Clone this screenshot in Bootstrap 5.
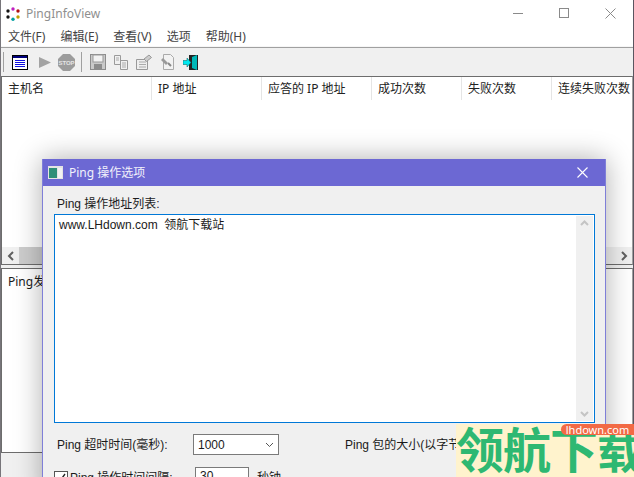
<!DOCTYPE html>
<html lang="zh-CN">
<head>
  <meta charset="UTF-8">
  <meta name="viewport" content="width=device-width, initial-scale=1.0">
  <title>PingInfoView</title>
  <link href="https://cdn.jsdelivr.net/npm/bootstrap@5.3.2/dist/css/bootstrap.min.css" rel="stylesheet">
  <style>
    html, body { height: 477px; overflow: hidden; }
    body {
      background: #5a5560;
      font-family: "Noto Sans", "Noto Sans CJK SC", sans-serif;
      font-size: 12px;
      color: #1a1a1a;
      line-height: 16px;
    }
    /* main window */
    .app { width: 633px; height: 477px; background: #f0f0f0; border-left: 1px solid #77757a; }
    .titlebar { height: 27px; background: #fff; padding-left: 5px; color: #8f8f8f; }
    .titlebar .name { font-size: 12px; margin-left: 6px; }
    .win-btn { width: 46px; height: 27px; }
    .menubar { height: 19px; background: #fff; gap: 15px; padding-left: 7px; color: #444; }
    .menu-rule { height: 2px; background: #f6f6f6; border-bottom: 1px solid #a0a0a0; }
    .toolbar { height: 28px; background: #f0f0f0; padding-left: 2px; }
    .tool-sep { width: 1px; height: 20px; background: #a0a0a0; }
    .pane { background: #fff; border: 1px solid #6d6d6d; border-right-color: #a0a0a0; }
    .list-pane { height: 189px; }
    .list-head { height: 23px; }
    .list-head > div { padding-left: 6px; border-right: 1px solid #e5e5e5; white-space: nowrap; overflow: hidden; color: #222; line-height: 23px; }
    .hscroll { height: 17px; background: #f0f0f0; }
    .hscroll .arrow { width: 17px; color: #606060; }
    .hscroll .thumb { background: #cdcdcd; }
    .detail-pane { height: 185px; margin-top: 3px; padding: 5px 6px; }
    /* dialog over the window */
    .dialog {
      position: absolute; left: 42px; top: 159px; width: 564px; height: 340px;
      background: #f0f0f0; border: 1px solid #7f7fd8; border-top: 0;
      box-shadow: 0 0 26px rgba(0, 0, 0, .32);
    }
    .dialog-title { height: 27px; background: #6c68d3; color: #f2f2fb; padding: 0 0 0 5px; font-size: 12px; }
    .dialog-title .name { margin-left: 6px; }
    .dialog-body { padding: 10px 10px 0 11px; font-family: "Liberation Sans", "Noto Sans CJK SC", sans-serif; }
    .field-label { padding-left: 3px; margin-bottom: 2px; color: #1c1c1c; }
    .addr-box { height: 209px; background: #fff; border: 1px solid #0078d7; padding: 2px 4px; }
    .addr-scroll { width: 17px; background: #f0f0f0; margin: -1px -3px -1px 0; }
    .option-row { height: 21px; margin-top: 11px; }
    .option-row + .option-row { margin-top: 12px; }
    .combo { width: 86px; height: 21px; background: #fff; border: 1px solid #7a7a7a; padding: 0 4px; }
    .num-box { height: 21px; background: #fff; border: 1px solid #7a7a7a; padding: 0 4px; }
    .check-box { width: 14px; height: 14px; background: #fff; border: 1px solid #555; margin-right: 2px; }
    /* site watermark */
    .mark { position: absolute; left: 456px; top: 424px; width: 178px; height: 53px; overflow: hidden; }
    .mark-tag {
      position: absolute; right: 0; top: 0; width: 73px; height: 11px;
      background: #f26a45; color: #fff; font-size: 11px; line-height: 11px;
      text-align: center; border-radius: 6px 0 0 6px;
    }
    .mark-text {
      position: absolute; left: 0; top: -5px; white-space: nowrap;
      font-family: "Noto Sans CJK SC", sans-serif; font-weight: 700;
      font-size: 48px; line-height: 56px; color: #2eb872; letter-spacing: -1px;
    }
  </style>
</head>
<body>
  <div class="app d-flex flex-column">
    <div class="titlebar d-flex align-items-center">
      <svg width="14" height="14" viewBox="0 0 14 14">
        <circle cx="7" cy="2" r="1.700" fill="#c020c0"/><circle cx="12" cy="4" r="1.700" fill="#b01010"/>
        <circle cx="12" cy="10" r="1.700" fill="#c0a000"/><circle cx="7" cy="12.200" r="1.700" fill="#00a0a0"/>
        <circle cx="2" cy="10" r="1.700" fill="#111"/><circle cx="2" cy="4" r="1.700" fill="#111"/>
      </svg>
      <span class="name flex-grow-1">PingInfoView</span>
      <div class="win-btn d-flex align-items-center justify-content-center">
        <svg width="11" height="11" viewBox="0 0 11 11"><path d="M0 5.500h10" stroke="#8a8a8a"/></svg>
      </div>
      <div class="win-btn d-flex align-items-center justify-content-center">
        <svg width="11" height="11" viewBox="0 0 11 11"><rect x=".5" y=".5" width="9" height="9" fill="none" stroke="#8a8a8a"/></svg>
      </div>
      <div class="win-btn d-flex align-items-center justify-content-center">
        <svg width="11" height="11" viewBox="0 0 11 11"><path d="M.5.5l10 10M10.500.5l-10 10" stroke="#8a8a8a"/></svg>
      </div>
    </div>
    <div class="menubar d-flex align-items-center">
      <span>文件(F)</span><span>编辑(E)</span><span>查看(V)</span><span>选项</span><span>帮助(H)</span>
    </div>
    <div class="menu-rule"></div>
    <div class="toolbar d-flex align-items-center">
      <div class="tool-sep"></div>
      <svg class="ms-2" width="16" height="15" viewBox="0 0 16 15"><rect x=".5" y=".5" width="15" height="14" fill="#fff" stroke="#000"/><rect x="1" y="1" width="14" height="2" fill="#00007c"/><path d="M3 5.500h10M3 7.500h10M3 9.500h10M3 11.500h10" stroke="#1414e0"/></svg>
      <svg style="margin-left:11px" width="12" height="13" viewBox="0 0 12 13"><path d="M0 1l12 5.500L0 12z" fill="#a3a3a3"/></svg>
      <svg style="margin-left:7px" width="17" height="17" viewBox="0 0 17 17"><path d="M5 0h7l5 5v7l-5 5H5l-5-5V5z" fill="#9c9c9c"/><text x="8.500" y="10.500" font-size="6" font-weight="700" text-anchor="middle" fill="#e4e4e4" font-family="Liberation Sans, sans-serif">STOP</text></svg>
      <div class="tool-sep" style="margin-left:6px"></div>
      <svg style="margin-left:8px" width="16" height="16" viewBox="0 0 16 16"><rect x=".5" y=".5" width="15" height="15" fill="#c9c9c9" stroke="#8c8c8c"/><rect x="3" y="1" width="10" height="7" fill="#f2f2f2" stroke="#999"/><rect x="4" y="10" width="8" height="5" fill="#8c8c8c"/></svg>
      <svg style="margin-left:7px" width="16" height="15" viewBox="0 0 16 15"><path d="M1.500.5h6v9h-6zM7.500 5.500h7v9h-7z" fill="#f0f0f0" stroke="#9a9a9a"/><path d="M3 3h3M3 5h3M9 8h4M9 10h4M9 12h4" stroke="#aaa"/></svg>
      <svg style="margin-left:7px" width="16" height="16" viewBox="0 0 16 16"><path d="M.5 5.500h11v10H.5z" fill="#eee" stroke="#999"/><path d="M3 8h7M3 10.500h7M3 13h7" stroke="#aaa"/><path d="M8 5l5-4 2.500 2.500-5 4z" fill="#ccc" stroke="#999"/></svg>
      <svg style="margin-left:8px" width="16" height="16" viewBox="0 0 16 16"><path d="M3.500.5h7l3 3v12h-10z" fill="#f2f2f2" stroke="#aaa"/><path d="M1 6l5 5 2-2-5-5z" fill="#9a9a9a"/><path d="M8 9l3 3" stroke="#888" stroke-width="2"/></svg>
      <svg style="margin-left:7px" width="17" height="17" viewBox="0 0 17 17"><path d="M6 1h9v15H6z" fill="#222"/><path d="M9 3l5-2v15l-5-2z" fill="#00b8b8"/><path d="M0 6.500h4V4l4 4.500L4 13v-2.500H0z" fill="#00e8f0" stroke="#005858" stroke-width=".5"/></svg>
    </div>
    <div class="pane list-pane d-flex flex-column">
      <div class="list-head d-flex">
        <div style="width:150px">主机名</div>
        <div style="width:110px">IP 地址</div>
        <div style="width:110px">应答的 IP 地址</div>
        <div style="width:90px">成功次数</div>
        <div style="width:90px">失败次数</div>
        <div class="flex-grow-1 border-0">连续失败次数</div>
      </div>
      <div class="flex-grow-1"></div>
      <div class="hscroll d-flex">
        <div class="arrow d-flex align-items-center justify-content-center">
          <svg width="8" height="10" viewBox="0 0 8 10"><path d="M6 1L2 5l4 4" fill="none" stroke="#606060" stroke-width="2"/></svg>
        </div>
        <div class="thumb" style="width:400px"></div>
        <div class="flex-grow-1"></div>
        <div class="arrow d-flex align-items-center justify-content-center">
          <svg width="8" height="10" viewBox="0 0 8 10"><path d="M2 1l4 4-4 4" fill="none" stroke="#606060" stroke-width="2"/></svg>
        </div>
      </div>
    </div>
    <div class="pane detail-pane">Ping发送状态</div>
  </div>

  <div class="dialog">
    <div class="dialog-title d-flex align-items-center">
      <svg width="15" height="13" viewBox="0 0 15 13"><rect width="15" height="13" fill="#e4e4e4"/><rect x="1" y="2" width="8" height="10" fill="#2f8f78"/><rect x="10" y="2" width="4" height="10" fill="#f2f2f2"/></svg>
      <span class="name flex-grow-1">Ping 操作选项</span>
      <div class="win-btn d-flex align-items-center justify-content-center">
        <svg width="11" height="11" viewBox="0 0 11 11"><path d="M.5.5l10 10M10.500.5l-10 10" stroke="#fff" stroke-width="1.100"/></svg>
      </div>
    </div>
    <div class="dialog-body">
      <div class="field-label">Ping 操作地址列表:</div>
      <div class="addr-box d-flex">
        <div class="flex-grow-1">www.LHdown.com&nbsp; 领航下载站</div>
        <div class="addr-scroll d-flex flex-column justify-content-between align-items-center py-1">
          <svg width="9" height="6" viewBox="0 0 9 6"><path d="M1 5l3.500-3.500L8 5" fill="none" stroke="#c4c4c4" stroke-width="2"/></svg>
          <svg width="9" height="6" viewBox="0 0 9 6"><path d="M1 1l3.500 3.500L8 1" fill="none" stroke="#c4c4c4" stroke-width="2"/></svg>
        </div>
      </div>
      <div class="option-row d-flex align-items-center">
        <div style="width:139px;padding-left:3px">Ping 超时时间(毫秒):</div>
        <div class="combo d-flex align-items-center justify-content-between">
          <span>1000</span>
          <svg width="9" height="6" viewBox="0 0 9 6"><path d="M1 1l3.500 3.500L8 1" fill="none" stroke="#555"/></svg>
        </div>
        <div style="margin-left:66px;width:143px">Ping 包的大小(以字节计):</div>
        <div class="num-box" style="width:56px">32</div>
      </div>
      <div class="option-row d-flex align-items-center">
        <div class="check-box d-flex align-items-center justify-content-center">
          <svg width="12" height="12" viewBox="0 0 12 12"><path d="M2 6l3 3 5-7" fill="none" stroke="#222" stroke-width="1.300"/></svg>
        </div>
        <div style="width:125px">Ping 操作时间间隔:</div>
        <div class="num-box" style="width:54px">30</div>
        <div class="ms-2">秒钟</div>
      </div>
    </div>
  </div>

  <div class="mark">
    <div class="mark-text">领航下载</div>
    <div class="mark-tag">lhdown.com</div>
  </div>

  <script src="https://cdn.jsdelivr.net/npm/bootstrap@5.3.2/dist/js/bootstrap.bundle.min.js"></script>
</body>
</html>
